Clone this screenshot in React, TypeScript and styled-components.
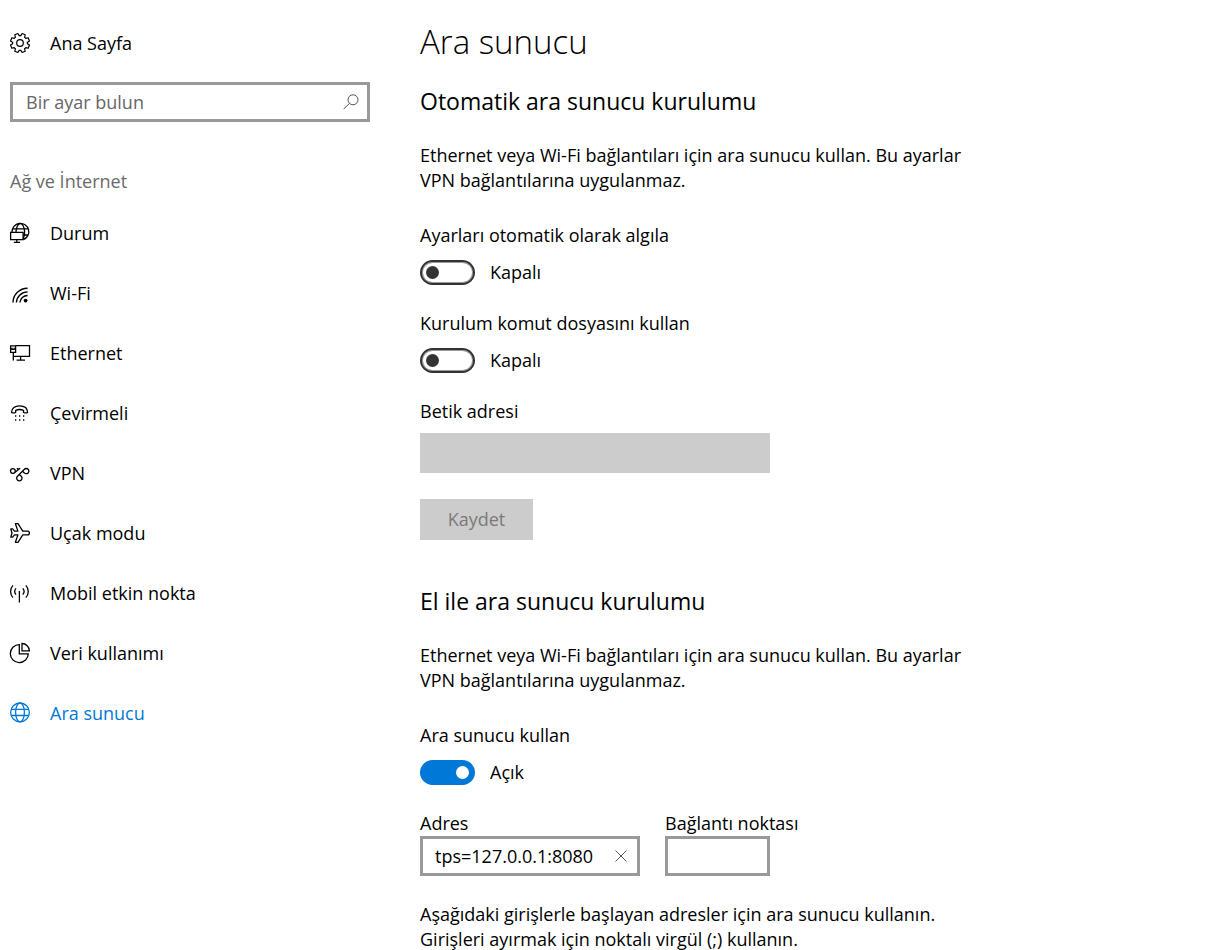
import React, { useId, useState } from 'react';
import styled, { createGlobalStyle } from 'styled-components';

const GlobalStyle = createGlobalStyle`
  *, *::before, *::after { box-sizing: border-box; }
  body {
    margin: 0;
    background: #fff;
    color: #000;
    font-family: 'Segoe UI', 'Open Sans', sans-serif;
    font-size: 18px;
    line-height: 25px;
  }
  input, button { font: inherit; color: inherit; border-radius: 0; margin: 0; }
  h1, h2, p { margin: 0; font-weight: 400; }
`;

const Page = styled.div`
  display: flex;
  align-items: flex-start;
  gap: 50px;
  padding: 0 10px;
`;

const Sidebar = styled.nav`
  flex: 0 0 360px;
  display: flex;
  flex-direction: column;
  padding-top: 13px;
`;

const NavLink = styled.a<{ $active?: boolean }>`
  display: flex;
  align-items: center;
  gap: 20px;
  height: 60px;
  color: ${(p) => (p.$active ? '#0078d7' : '#000')};
  text-decoration: none;
`;

const NavIcon = styled.svg`
  flex: none;
  width: 20px;
  height: 20px;
  overflow: visible;
  fill: none;
  stroke: currentColor;
  stroke-width: 1.3;
`;

const FieldBox = styled.div`
  display: flex;
  align-items: center;
  height: 40px;
  border: 3px solid #999;
  background: #fff;
`;

const SearchBox = styled(FieldBox)`
  margin-top: 9px;
`;

const FieldInput = styled.input`
  flex: 1;
  min-width: 0;
  height: 100%;
  border: 0;
  padding: 0 0 0 12px;
  background: transparent;
  outline: none;
  &::placeholder { color: #666; opacity: 1; }
`;

const SearchInput = styled(FieldInput)`
  padding: 0 13px;
`;

const IconButton = styled.button`
  display: flex;
  align-items: center;
  justify-content: center;
  flex: none;
  width: 33px;
  height: 34px;
  padding: 0;
  border: 0;
  background: none;
  && { color: #555; }
  svg { flex: none; fill: none; stroke: currentColor; stroke-width: 1; }
`;

const GroupTitle = styled.p`
  margin: 47px 0 9px;
  color: #6a6a6a;
`;

const Main = styled.main`
  flex: 1;
  min-width: 0;
  max-width: 550px;
  padding-top: 17px;
`;

const Title = styled.h1`
  font-size: 33px;
  line-height: 50px;
  && { font-weight: 300; }
`;

const Section = styled.section<{ $gap: number }>`
  display: flex;
  flex-direction: column;
  align-items: flex-start;
  gap: 26px;
  margin-top: ${(p) => p.$gap}px;
`;

const SectionTitle = styled.h2`
  font-size: 23px;
  line-height: 32px;
`;

const Intro = styled.p`
  margin-bottom: 4px;
`;

const Stack = styled.div<{ $gap?: number; $width?: number }>`
  display: flex;
  flex-direction: column;
  align-items: stretch;
  gap: ${(p) => p.$gap ?? 0}px;
  width: ${(p) => (p.$width ? `${p.$width}px` : 'auto')};
  max-width: 100%;
  white-space: nowrap;
`;

const FieldRow = styled.div`
  display: flex;
  gap: 25px;
`;

const SwitchRow = styled.div`
  display: flex;
  align-items: center;
  gap: 15px;
`;

const SwitchInput = styled.input`
  appearance: none;
  width: 55px;
  height: 25px;
  border: 2px solid #333;
  border-radius: 13px;
  box-shadow: inset 0 0 0 1px #999;
  background: #fff;
  display: flex;
  align-items: center;
  padding: 0 4px;
  &::before {
    content: '';
    width: 13px;
    height: 13px;
    border-radius: 50%;
    background: #333;
  }
  &:checked {
    justify-content: flex-end;
    border-color: #0078d7;
    background: #0078d7;
    box-shadow: none;
  }
  &:checked::before { background: #fff; }
`;

const DisabledInput = styled.input`
  width: 100%;
  height: 40px;
  border: 0;
  padding: 0 15px;
  background: #ccc;
`;

const SaveButton = styled.button`
  width: 113px;
  height: 41px;
  border: 0;
  padding: 0;
  background: #ccc;
  && { color: #7a7a7a; }
`;

function gearPath(): string {
  const points: string[] = [];
  for (let i = 0; i < 8; i++) {
    const mid = 22.5 + i * 45;
    const corners: [number, number][] = [
      [-16, 7.4],
      [-10, 9.7],
      [10, 9.7],
      [16, 7.4],
    ];
    corners.forEach(([offset, r]) => {
      const a = ((mid + offset) * Math.PI) / 180;
      points.push(`${(10 + r * Math.cos(a)).toFixed(2)} ${(10 + r * Math.sin(a)).toFixed(2)}`);
    });
  }
  return `M${points.join('L')}Z`;
}

const icons: Record<string, React.ReactNode> = {
  gear: (
    <>
      <path d={gearPath()} strokeLinejoin="round" strokeWidth="1.2" />
      <circle cx="10" cy="10" r="3.3" strokeWidth="1.2" />
    </>
  ),
  status: (
    <>
      <path d="M2 9A8.4 8.4 0 1 1 13.3 16.6M6 9C6.2 4.5 8 .5 10.3 .5S14.5 4.5 14.6 9C14.6 11.5 14 14.5 13 16M2.5 5.8H18M13.3 12H18" />
      <path d="M.6 9.4H13.1V16.6H.6ZM6.8 16.6V19.4M3.8 19.4H10" />
    </>
  ),
  wifi: (
    <>
      <path d="M3 19.5A14.500 14.500 0 0 1 17.600 5.200M6.400 19.500A11.200 11.200 0 0 1 17.600 8.900M9.900 19.500A7.700 7.700 0 0 1 17.600 12.500" strokeWidth="1.4" />
      <circle cx="15.6" cy="17.6" r="1.9" fill="currentColor" stroke="none" />
    </>
  ),
  ethernet: (
    <path d="M5.5 2.7H19.5V13.4H3.5M.6 2.900H5.600V9.400H.6ZM3.300 9.400V17.500M10.600 13.400V17M6.600 17.200H15M2 4.800V6.300H4.200V4.800" />
  ),
  dialup: (
    <>
      <path d="M1.500 9.500C1.500 5 5 2.800 9.500 2.800S17.600 5 17.600 9.500Q15.500 10.400 13.500 9.500V7.300Q9.500 5.700 5.700 7.300V9.500Q3.500 10.400 1.500 9.500Z" strokeLinejoin="round" />
      <path d="M5 13H14.500M5 17H14.500" strokeDasharray="1.300 2.700" />
    </>
  ),
  vpn: (
    <>
      <circle cx="2.9" cy="8" r="2.4" />
      <path d="M5.100 9.200L8.500 6.400M6.800 5.200L8.500 6.400L10.200 5.200M7.500 13.200L14.400 6.300A2.600 2.600 0 1 1 14.400 9.900L12.800 8.500M7.500 13.200A2.700 2.700 0 1 0 11.200 13.200L9.400 11.300" />
    </>
  ),
  airplane: (
    <path d="M17.500 8.100H12.800L8 .7H5.400L7.900 8.100H4.500L2.600 5.900H.8L2 10L.8 14.100H2.600L4.500 11.900H7.900L5.400 19.300H8L12.800 11.900H17.500A1.900 1.900 0 0 0 17.500 8.100Z" strokeLinejoin="round" />
  ),
  hotspot: (
    <path d="M9.400 8V19.500M6 5.400A4.800 4.800 0 0 0 6 11.600M12.800 5.400A4.800 4.800 0 0 1 12.800 11.600M3 2.400A8.800 8.800 0 0 0 3 14.600M15.800 2.400A8.800 8.800 0 0 1 15.800 14.600" />
  ),
  pie: (
    <path d="M9.300 1.600A9 9 0 1 0 18.300 10.800H9.300ZM12 .5V7.900H19.400A7.500 7.500 0 0 0 12 .5Z" />
  ),
  globe: (
    <>
      <circle cx="10" cy="9.400" r="9.400" />
      <ellipse cx="10" cy="9.400" rx="4.400" ry="9.400" />
      <path d="M1.200 6.300H18.800M1.200 12.500H18.800" />
    </>
  ),
};

const links: { icon: string; label: string }[] = [
  { icon: 'status', label: 'Durum' },
  { icon: 'wifi', label: 'Wi-Fi' },
  { icon: 'ethernet', label: 'Ethernet' },
  { icon: 'dialup', label: 'Çevirmeli' },
  { icon: 'vpn', label: 'VPN' },
  { icon: 'airplane', label: 'Uçak modu' },
  { icon: 'hotspot', label: 'Mobil etkin nokta' },
  { icon: 'pie', label: 'Veri kullanımı' },
  { icon: 'globe', label: 'Ara sunucu' },
];

function NavItem({ icon, label, active }: { icon: string; label: string; active?: boolean }) {
  return (
    <NavLink href="#" $active={active} aria-current={active ? 'page' : undefined}>
      <NavIcon viewBox="0 0 20 20" aria-hidden="true">{icons[icon]}</NavIcon>
      {label}
    </NavLink>
  );
}

function Toggle({ label, initial = false }: { label: string; initial?: boolean }) {
  const id = useId();
  const [on, setOn] = useState(initial);
  return (
    <Stack $gap={12}>
      <label htmlFor={id}>{label}</label>
      <SwitchRow>
        <SwitchInput id={id} type="checkbox" role="switch" checked={on} onChange={() => setOn(!on)} />
        <span>{on ? 'Açık' : 'Kapalı'}</span>
      </SwitchRow>
    </Stack>
  );
}

export default function App() {
  const [address, setAddress] = useState('tps=127.0.0.1:8080');
  return (
    <>
      <GlobalStyle />
      <Page>
        <Sidebar>
          <NavItem icon="gear" label="Ana Sayfa" />
          <SearchBox>
            <SearchInput type="text" placeholder="Bir ayar bulun" aria-label="Bir ayar bulun" />
            <IconButton aria-label="Ara">
              <svg width="16" height="16" viewBox="0 0 16 16">
                <circle cx="10" cy="5.8" r="5" />
                <path d="M6.4 9.4L.6 15.2" />
              </svg>
            </IconButton>
          </SearchBox>
          <GroupTitle>Ağ ve İnternet</GroupTitle>
          {links.map((link) => (
            <NavItem key={link.icon} {...link} active={link.icon === 'globe'} />
          ))}
        </Sidebar>
        <Main>
          <Title>Ara sunucu</Title>
          <Section $gap={18}>
            <SectionTitle>Otomatik ara sunucu kurulumu</SectionTitle>
            <Intro>
              Ethernet veya Wi-Fi bağlantıları için ara sunucu kullan. Bu ayarlar VPN bağlantılarına
              uygulanmaz.
            </Intro>
            <Toggle label="Ayarları otomatik olarak algıla" />
            <Toggle label="Kurulum komut dosyasını kullan" />
            <Stack $gap={9} $width={350}>
              <label htmlFor="script">Betik adresi</label>
              <DisabledInput id="script" type="text" disabled />
            </Stack>
            <SaveButton disabled>Kaydet</SaveButton>
          </Section>
          <Section $gap={45}>
            <SectionTitle>El ile ara sunucu kurulumu</SectionTitle>
            <Intro>
              Ethernet veya Wi-Fi bağlantıları için ara sunucu kullan. Bu ayarlar VPN bağlantılarına
              uygulanmaz.
            </Intro>
            <Toggle label="Ara sunucu kullan" initial />
            <FieldRow>
              <Stack $width={220}>
                <label htmlFor="address">Adres</label>
                <FieldBox>
                  <FieldInput
                    id="address"
                    type="text"
                    value={address}
                    onChange={(e) => setAddress(e.target.value)}
                  />
                  <IconButton aria-label="Temizle" onClick={() => setAddress('')}>
                    <svg width="12" height="12" viewBox="0 0 12 12">
                      <path d="M.5 .5L11.5 11.5M11.5 .5L.5 11.5" />
                    </svg>
                  </IconButton>
                </FieldBox>
              </Stack>
              <Stack $width={105}>
                <label htmlFor="port">Bağlantı noktası</label>
                <FieldBox>
                  <FieldInput id="port" type="text" />
                </FieldBox>
              </Stack>
            </FieldRow>
            <p>
              Aşağıdaki girişlerle başlayan adresler için ara sunucu kullanın. Girişleri ayırmak için
              noktalı virgül (;) kullanın.
            </p>
          </Section>
        </Main>
      </Page>
    </>
  );
}
